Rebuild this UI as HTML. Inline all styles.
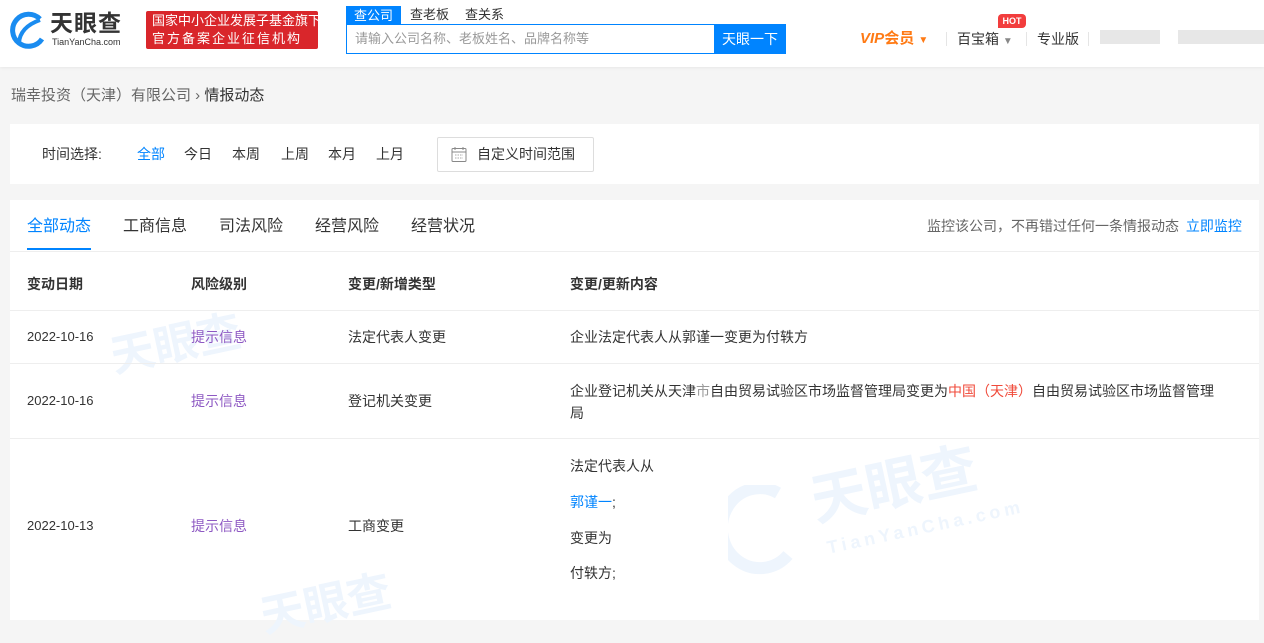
<!DOCTYPE html>
<html><head><meta charset="utf-8"><style>
*{margin:0;padding:0;box-sizing:border-box}
body{width:1264px;height:607px;overflow:hidden;background:#f5f5f5;font-family:"Liberation Sans","Noto Sans CJK SC",sans-serif;color:#333;font-size:14px;line-height:18px;position:relative}
.a{position:absolute;white-space:nowrap}
.hdr{position:absolute;left:0;top:0;width:1264px;height:67px;background:#fff;box-shadow:0 1px 3px rgba(0,0,0,.06)}
.card{position:absolute;left:10px;width:1249px;background:#fff}
.line{position:absolute;left:0;width:1249px;height:1px;background:#eee}
.wm{position:absolute;color:#eef5fd;font-weight:bold;white-space:nowrap}
</style></head><body>
<div class="hdr">
  <svg class="a" style="left:10px;top:11px" width="36" height="38" viewBox="0 0 36 38"><path d="M30 8 A16 16 0 1 0 32 28" fill="none" stroke="#1a8cf0" stroke-width="5"/><path d="M9 32 Q10 16 30 9" stroke="#1a8cf0" stroke-width="4" fill="none"/></svg>
  <div class="a" style="left:50px;top:9px;font-size:23px;line-height:28px;font-weight:bold;color:#333;letter-spacing:1px">天眼查</div>
  <div class="a" style="left:52px;top:37px;font-size:9px;line-height:10px;color:#333">TianYanCha.com</div>
  <div class="a" style="left:146px;top:11px;width:172px;height:38px;background:#d9262b;border-radius:2px;color:#fff;font-size:13px;line-height:18px;padding:1px 0 0 6px">国家中小企业发展子基金旗下<br><span style="letter-spacing:2px">官方备案企业征信机构</span></div>
  <div class="a" style="left:346px;top:6px;width:55px;height:19px;background:#0084ff;color:#fff;text-align:center;font-size:13px;line-height:19px">查公司</div>
  <div class="a" style="left:410px;top:6px;font-size:13px;color:#333">查老板</div>
  <div class="a" style="left:465px;top:6px;font-size:13px;color:#333">查关系</div>
  <div class="a" style="left:346px;top:24px;width:440px;height:30px;border:1px solid #0084ff;background:#fff"></div>
  <div class="a" style="left:355px;top:30px;font-size:13px;color:#999">请输入公司名称、老板姓名、品牌名称等</div>
  <div class="a" style="left:714px;top:24px;width:72px;height:30px;background:#0084ff;color:#fff;text-align:center;line-height:30px;font-size:14px">天眼一下</div>
  <div class="a" style="left:860px;top:30px;font-size:15px;font-weight:bold;color:#ff7a14;font-style:italic">VIP<span style="font-style:normal">会员</span> <span style="font-size:10px;font-style:normal">▼</span></div>
  <div class="a" style="left:946px;top:32px;width:1px;height:14px;background:#e5e5e5"></div>
  <div class="a" style="left:957px;top:30px;font-size:14px">百宝箱 <span style="font-size:10px;color:#888">▼</span></div>
  <div class="a" style="left:998px;top:14px;width:28px;height:14px;background:#f23d3d;color:#fff;font-size:9px;font-weight:bold;text-align:center;line-height:14px;border-radius:4px 4px 4px 0">HOT</div>
  <div class="a" style="left:1026px;top:32px;width:1px;height:14px;background:#e5e5e5"></div>
  <div class="a" style="left:1037px;top:30px;font-size:14px">专业版</div>
  <div class="a" style="left:1088px;top:32px;width:1px;height:14px;background:#e5e5e5"></div>
  <div class="a" style="left:1100px;top:30px;width:60px;height:14px;background:#ddd;opacity:.7"></div>
  <div class="a" style="left:1178px;top:30px;width:86px;height:14px;background:#ddd;opacity:.7"></div>
</div>
<div class="a" style="left:11px;top:86px;font-size:15px;line-height:20px;color:#666">瑞幸投资（天津）有限公司 › <span style="color:#333">情报动态</span></div>
<div class="card" style="top:124px;height:60px">
  <div class="a" style="left:32px;top:21px">时间选择:</div>
  <div class="a" style="left:127px;top:21px;color:#0084ff">全部</div>
  <div class="a" style="left:174px;top:21px">今日</div>
  <div class="a" style="left:222px;top:21px">本周</div>
  <div class="a" style="left:271px;top:21px">上周</div>
  <div class="a" style="left:318px;top:21px">本月</div>
  <div class="a" style="left:366px;top:21px">上月</div>
  <div class="a" style="left:427px;top:13px;width:157px;height:35px;border:1px solid #ddd;border-radius:2px"></div>
  <svg class="a" style="left:441px;top:22px" width="16" height="17" viewBox="0 0 16 17"><rect x="1" y="2.5" width="14" height="13" rx="1" fill="none" stroke="#888"/><path d="M4 1v3M12 1v3M1 6h14" stroke="#888"/><path d="M4 9h8M4 12h8" stroke="#aaa" stroke-dasharray="1.5 1"/></svg>
  <div class="a" style="left:467px;top:21px">自定义时间范围</div>
</div>
<div class="card" style="top:200px;height:420px">
  <div class="wm" style="left:100px;top:120px;font-size:44px;line-height:50px;transform:rotate(-12deg)">天眼查</div>
  <div class="wm" style="left:800px;top:255px;font-size:56px;line-height:60px;transform:rotate(-12deg)">天眼查</div>
  <div class="wm" style="left:815px;top:318px;font-size:18px;transform:rotate(-12deg);letter-spacing:4px">TianYanCha.com</div>
  <svg class="a" style="left:718px;top:285px" width="70" height="90" viewBox="0 0 70 90"><path d="M50 8 A38 40 0 1 0 60 70" fill="none" stroke="#eef5fd" stroke-width="12"/></svg>
  <div class="wm" style="left:250px;top:380px;font-size:44px;line-height:50px;transform:rotate(-12deg)">天眼查</div>
  <div class="a" style="left:17px;top:17px;font-size:16px;line-height:20px;color:#0084ff">全部动态</div>
  <div class="a" style="left:17px;top:48px;width:64px;height:2px;background:#0084ff"></div>
  <div class="a" style="left:113px;top:17px;font-size:16px;line-height:20px">工商信息</div>
  <div class="a" style="left:209px;top:17px;font-size:16px;line-height:20px">司法风险</div>
  <div class="a" style="left:305px;top:17px;font-size:16px;line-height:20px">经营风险</div>
  <div class="a" style="left:401px;top:17px;font-size:16px;line-height:20px">经营状况</div>
  <div class="a" style="left:917px;top:17px;color:#666">监控该公司，不再错过任何一条情报动态 <span style="color:#0084ff;margin-left:3px">立即监控</span></div>
  <div class="line" style="top:51px"></div>
  <div style="font-weight:bold">
  <div class="a" style="left:17px;top:75px">变动日期</div>
  <div class="a" style="left:181px;top:75px">风险级别</div>
  <div class="a" style="left:338px;top:75px">变更/新增类型</div>
  <div class="a" style="left:560px;top:75px">变更/更新内容</div>
  </div>
  <div class="line" style="top:110px"></div>
  <div class="a" style="left:17px;top:128px;font-size:13px">2022-10-16</div>
  <div class="a" style="left:181px;top:128px;color:#8e59c3">提示信息</div>
  <div class="a" style="left:338px;top:128px">法定代表人变更</div>
  <div class="a" style="left:560px;top:128px">企业法定代表人从郭谨一变更为付轶方</div>
  <div class="line" style="top:163px"></div>
  <div class="a" style="left:17px;top:192px;font-size:13px">2022-10-16</div>
  <div class="a" style="left:181px;top:192px;color:#8e59c3">提示信息</div>
  <div class="a" style="left:338px;top:192px">登记机关变更</div>
  <div class="a" style="left:560px;top:180px;line-height:22px;white-space:normal;width:652px">企业登记机关从天津<span style="color:#999">市</span>自由贸易试验区市场监督管理局变更为<span style="color:#f04a3a">中国（天津）</span>自由贸易试验区市场监督管理局</div>
  <div class="line" style="top:238px"></div>
  <div class="a" style="left:17px;top:317px;font-size:13px">2022-10-13</div>
  <div class="a" style="left:181px;top:317px;color:#8e59c3">提示信息</div>
  <div class="a" style="left:338px;top:317px">工商变更</div>
  <div class="a" style="left:560px;top:257px">法定代表人从</div>
  <div class="a" style="left:560px;top:293px;color:#0084ff">郭谨一<span style="color:#333">;</span></div>
  <div class="a" style="left:560px;top:329px">变更为</div>
  <div class="a" style="left:560px;top:364px">付轶方;</div>
</div>
</body></html>
